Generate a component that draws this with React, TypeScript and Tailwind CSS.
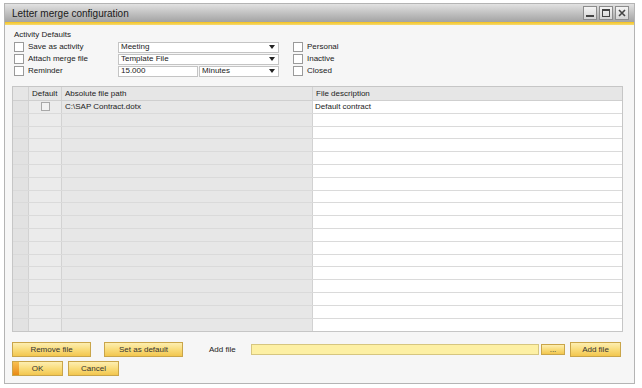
import React from 'react';

const font = { fontFamily: '"Liberation Sans", Arial, sans-serif' };

const CheckBox: React.FC = () => (
  <div className="w-[10px] h-[10px] border border-[#9a9a9a] bg-white shrink-0" />
);

const Dropdown: React.FC<{ value: string; width: string }> = ({ value, width }) => (
  <div className={`${width} h-[11px] border border-[#c4c4c4] bg-white flex items-center justify-between pl-[2px] pr-[3px]`}>
    <span className="leading-none">{value}</span>
    <svg width="6" height="4" viewBox="0 0 6 4">
      <path d="M0 0h6L3 4z" fill="#222" />
    </svg>
  </div>
);

const YellowButton: React.FC<{ label: string; width: string; primary?: boolean; height?: string }> = ({
  label,
  width,
  primary,
  height = 'h-[15px]',
}) => (
  <div
    className={`${width} ${height} relative border border-[#c9a54a] bg-gradient-to-b from-[#fdeeb0] via-[#f9dc7a] to-[#f2c64e] flex items-center justify-center text-[#333]`}
  >
    {primary && (
      <div className="absolute left-0 top-0 bottom-0 w-[6px] bg-gradient-to-b from-[#f8c050] to-[#e88a10]" />
    )}
    <span className="leading-none">{label}</span>
  </div>
);

const rows = Array.from({ length: 18 });

export default function App() {
  return (
    <div className="w-[642px] h-[388px] bg-white pl-[4px] pt-[3px] text-[8px] text-[#222]" style={font}>
      <div className="w-[631px] h-[381px] border border-[#b4b4b4] flex flex-col bg-[#f6f6f6]">
        {/* title bar */}
        <div className="h-[18px] bg-gradient-to-b from-[#e2e2e2] via-[#c2c2c2] to-[#a3a3a3] flex items-center justify-between pl-[7px] pr-[5px]">
          <span className="text-[10px] text-[#1a1a1a]">Letter merge configuration</span>
          <div className="flex gap-[2px]">
            <div className="w-[14px] h-[14px] bg-gradient-to-b from-[#f4f4f4] to-[#d4d4d4] border border-[#8c8c8c] flex items-end justify-center pb-[2px]">
              <div className="w-[8px] h-[2px] bg-[#444]" />
            </div>
            <div className="w-[14px] h-[14px] bg-gradient-to-b from-[#f4f4f4] to-[#d4d4d4] border border-[#8c8c8c] flex items-center justify-center">
              <div className="w-[8px] h-[8px] border border-[#444] border-t-2" />
            </div>
            <div className="w-[14px] h-[14px] bg-gradient-to-b from-[#f4f4f4] to-[#d4d4d4] border border-[#8c8c8c] flex items-center justify-center">
              <svg width="8" height="8" viewBox="0 0 8 8">
                <path d="M1 1l6 6M7 1l-6 6" stroke="#444" strokeWidth="1.6" />
              </svg>
            </div>
          </div>
        </div>
        <div className="h-[3px] bg-gradient-to-b from-[#f7c400] to-[#f3d970]" />

        {/* body */}
        <div className="flex-1 flex flex-col pl-[7px] pr-[11px] pt-[5px]">
          <div className="h-[10px] leading-[10px] mb-[1px] pl-[2px]">Activity Defaults</div>

          <div className="flex flex-col">
            {[
              { label: 'Save as activity', right: 'Personal', field: <Dropdown value="Meeting" width="w-[161px]" /> },
              { label: 'Attach merge file', right: 'Inactive', field: <Dropdown value="Template File" width="w-[161px]" /> },
              {
                label: 'Reminder',
                right: 'Closed',
                field: (
                  <div className="flex gap-[1px]">
                    <div className="w-[80px] h-[11px] border border-[#c4c4c4] bg-white flex items-center pl-[2px]">
                      <span className="leading-none">15.000</span>
                    </div>
                    <Dropdown value="Minutes" width="w-[80px]" />
                  </div>
                ),
              },
            ].map((r) => (
              <div key={r.label} className="h-[12px] flex items-center pl-[2px]">
                <CheckBox />
                <span className="ml-[4px] w-[90px]">{r.label}</span>
                {r.field}
                <div className="ml-[14px]">
                  <CheckBox />
                </div>
                <span className="ml-[4px]">{r.right}</span>
              </div>
            ))}
          </div>

          {/* grid */}
          <div className="mt-[9px] w-[611px] border border-[#c6c6c6] bg-white">
            <div className="flex h-[14px] bg-[#e6e6e6] border-b border-[#cfcfcf]">
              <div className="w-[16px] border-r border-[#d2d2d2]" />
              <div className="w-[33px] border-r border-[#d2d2d2] flex items-center pl-[3px]">Default</div>
              <div className="w-[251px] border-r border-[#d2d2d2] flex items-center pl-[3px]">Absolute file path</div>
              <div className="flex-1 flex items-center pl-[3px]">File description</div>
            </div>
            {rows.map((_, i) => (
              <div key={i} className="flex h-[12.8px] border-b border-[#dadada] last:border-b-0">
                <div className="w-[16px] bg-[#e2e2e2] border-r border-[#d2d2d2]" />
                <div className="w-[33px] bg-[#ebebeb] border-r border-[#d2d2d2] flex items-center justify-center">
                  {i === 0 && <div className="w-[9px] h-[9px] border border-[#a8a8a8] bg-[#f2f2f2]" />}
                </div>
                <div className="w-[251px] bg-[#e7e7e7] border-r border-[#d2d2d2] flex items-center pl-[3px]">
                  {i === 0 && 'C:\\SAP Contract.dotx'}
                </div>
                <div className="flex-1 bg-white flex items-center pl-[2px]">{i === 0 && 'Default contract'}</div>
              </div>
            ))}
          </div>

          {/* bottom controls */}
          <div className="mt-[10px] flex items-center">
            <YellowButton label="Remove file" width="w-[79px]" />
            <div className="ml-[13px]">
              <YellowButton label="Set as default" width="w-[79px]" />
            </div>
            <span className="ml-[26px] w-[42px]">Add file</span>
            <div className="w-[288px] h-[11px] border border-[#d6c680] bg-[#fdf0a4]" />
            <div className="ml-[2px]">
              <YellowButton label="..." width="w-[24px]" height="h-[11px]" />
            </div>
            <div className="ml-[5px]">
              <YellowButton label="Add file" width="w-[51px]" />
            </div>
          </div>
          <div className="mt-[4px] flex gap-[5px]">
            <YellowButton label="OK" width="w-[51px]" primary />
            <YellowButton label="Cancel" width="w-[51px]" />
          </div>
        </div>
      </div>
    </div>
  );
}
